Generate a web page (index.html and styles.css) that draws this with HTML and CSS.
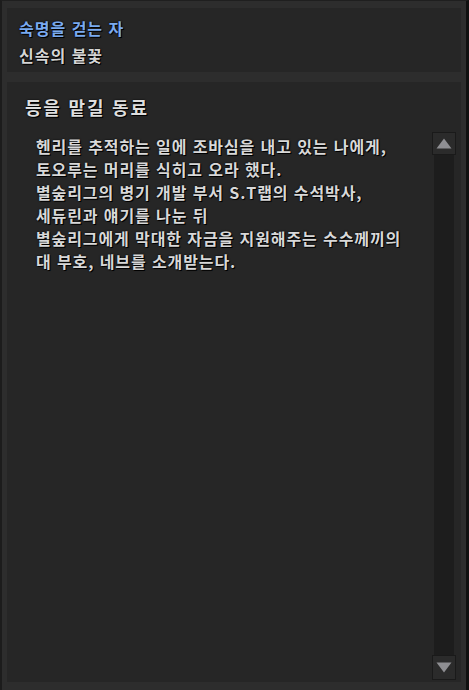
FILE: index.html
```html
<!DOCTYPE html>
<html lang="ko">
<head>
<meta charset="utf-8">
<link rel="stylesheet" href="styles.css">
</head>
<body>
<div class="frame">
  <header class="head">
    <div class="name">숙명을 걷는 자</div>
    <div class="sub">신속의 불꽃</div>
  </header>
  <section class="panel">
    <h1 class="title">등을 맡길 동료</h1>
    <div class="body">
      <div class="text">
        <p>헨리를 추적하는 일에 조바심을 내고 있는 나에게,</p>
        <p>토오루는 머리를 식히고 오라 했다.</p>
        <p>별숲리그의 병기 개발 부서 S.T랩의 수석박사,</p>
        <p>세듀린과 얘기를 나눈 뒤</p>
        <p>별숲리그에게 막대한 자금을 지원해주는 수수께끼의</p>
        <p>대 부호, 네브를 소개받는다.</p>
      </div>
      <div class="scroll">
        <div class="btn"><svg width="16" height="11" viewBox="0 0 16 11"><polygon points="8,0.5 15.5,10.5 0.5,10.5" fill="#8e8e92"/></svg></div>
        <div class="track"></div>
        <div class="btn"><svg width="16" height="11" viewBox="0 0 16 11"><polygon points="0.5,0.5 15.5,0.5 8,10.5" fill="#8e8e92"/></svg></div>
      </div>
    </div>
  </section>
</div>
</body>
</html>
```

FILE: styles.css
```css
html, body {
  margin: 0;
  padding: 0;
  background: #2d2d2d;
}
body {
  width: 469px;
  height: 690px;
  overflow: hidden;
  font-family: "Noto Sans CJK KR", "Noto Sans", sans-serif;
}
.frame {
  box-sizing: border-box;
  width: 469px;
  height: 690px;
  border-left: 2px solid #1c1c1c;
  border-top: 1px solid #1f1f1f;
  border-right: 3px solid #101010;
  padding: 7px 5px 8px 5px;
  display: flex;
  flex-direction: column;
  gap: 10px;
}
.head {
  height: 64px;
  flex: none;
  background: #262626;
  box-sizing: border-box;
  padding: 9px 0 0 12px;
  text-shadow: 1px 1px 0 #000, 0 0 2px #000;
}
.name {
  color: #7aaaf0;
  font-size: 16px;
  line-height: 22px;
  font-weight: 700;
  letter-spacing: 1px;
}
.sub {
  color: #d4d4d4;
  font-size: 16px;
  line-height: 22px;
  margin-top: 5px;
  font-weight: 700;
  letter-spacing: 1px;
}
.panel {
  flex: 1;
  background: #262626;
  display: flex;
  flex-direction: column;
  padding: 13px 5px 2px 18px;
  min-height: 0;
}
.title {
  margin: 0;
  font-size: 18px;
  line-height: 24px;
  font-weight: 700;
  color: #dedede;
  letter-spacing: 1.8px;
  text-shadow: 1px 1px 0 #000, 0 0 2px #000;
}
.body {
  flex: 1;
  display: flex;
  margin-top: 13px;
  min-height: 0;
}
.text {
  flex: 1;
  padding: 3px 0 0 11px;
  color: #d8d8d8;
  font-size: 16px;
  line-height: 23px;
  font-weight: 700;
  letter-spacing: 0.9px;
  text-shadow: 1px 1px 0 #000, 0 0 2px #000;
}
.text p {
  margin: 0;
  white-space: nowrap;
}
.scroll {
  width: 24px;
  flex: none;
  display: flex;
  flex-direction: column;
}
.btn {
  height: 23px;
  flex: none;
  box-sizing: border-box;
  background: #2b2b2b;
  border: 1px solid #1a1a1a;
  display: flex;
  align-items: center;
  justify-content: center;
}
.btn:last-child {
  height: 25px;
}
.track {
  flex: 1;
  margin: 0 2px;
  background: #1d1d1d;
}
```
